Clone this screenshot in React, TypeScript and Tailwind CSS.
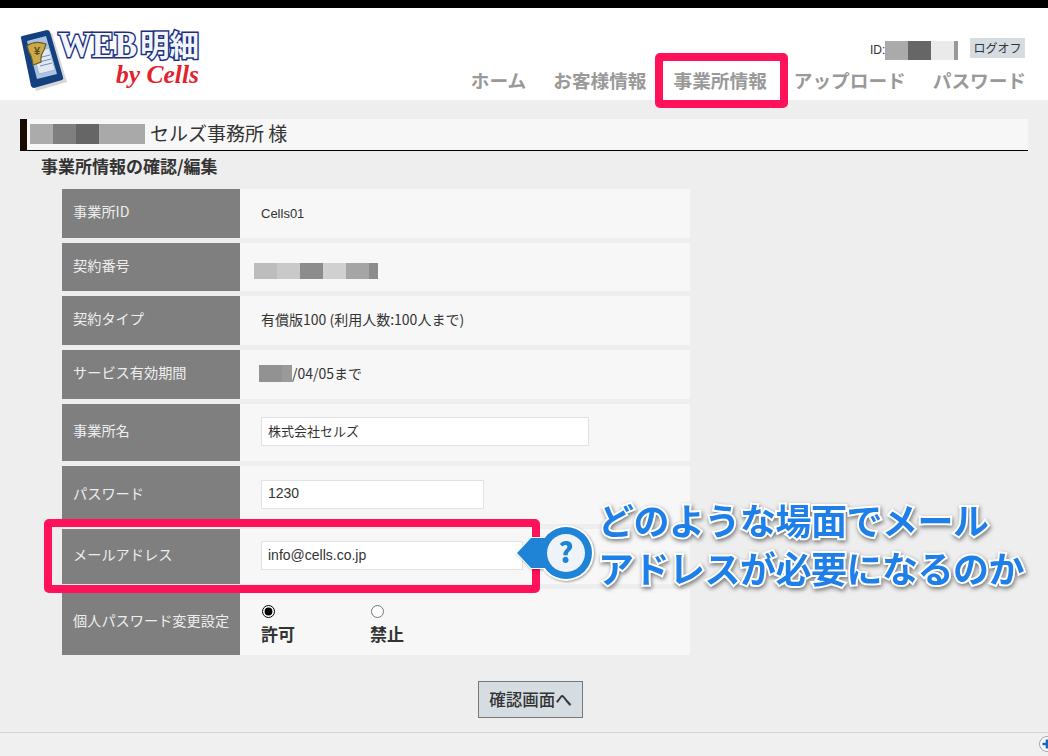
const jp = "font-['Noto_Sans_CJK_JP','Noto_Sans',sans-serif]";

function Pixels({ blocks, className }: { blocks: [number, string][]; className: string }) {
  return (
    <div className={`flex ${className}`}>
      {blocks.map(([w, c], i) => (
        <div key={i} style={{ width: w, backgroundColor: c }} />
      ))}
    </div>
  );
}

function Logo() {
  return (
    <svg width="190" height="82" viewBox="16 16 190 82" className="block">
      <path d="M23 40L52 33L67 82L36 91Z" fill="#bdbdbd" opacity="0.6" />
      <path d="M21 38Q20 37 22 36L47 30Q49 30 50 32L63 77Q64 79 62 80L34 88Q32 88 31 86Z" fill="#14407f" />
      <path d="M27 41L46 36L57 74L37 79Z" fill="#a9c4e2" />
      <path d="M33 52L49 48L55 70L39 74Z" fill="#e2e9f3" stroke="#8aa5c9" strokeWidth="0.6" />
      <path d="M38 58L50 55M39 62L51 59M40 66L52 63" stroke="#6d8fb8" strokeWidth="1" />
      <path d="M27 46Q35 40 46 44L44 50Q40 56 41 62L33 65Q32 56 29 52Z" fill="#c9a94a" stroke="#6e5a20" strokeWidth="1.2" />
      <text x="37" y="55" fontFamily="'Liberation Sans',sans-serif" fontWeight="700" fontSize="11" textAnchor="middle" fill="#5c4c1a">¥</text>
      <text x="58" y="57" fontFamily="'Liberation Serif',serif" fontWeight="700" fontSize="36" fill="#f2f5fb" stroke="#1c2f7f" strokeWidth="3" paintOrder="stroke" textLength="79" lengthAdjust="spacingAndGlyphs">WEB</text>
      <text x="140" y="56" fontFamily="'Noto Sans CJK JP',sans-serif" fontWeight="700" fontSize="30" fill="#f2f5fb" stroke="#1c2f7f" strokeWidth="3" paintOrder="stroke" textLength="59" lengthAdjust="spacingAndGlyphs">明細</text>
      <text x="116" y="83" fontFamily="'Liberation Serif',serif" fontWeight="700" fontStyle="italic" fontSize="26" fill="#e4222e" textLength="83" lengthAdjust="spacingAndGlyphs">by Cells</text>
    </svg>
  );
}

function Row({ label, h, children, mb = 5 }: { label: string; h: number; children: React.ReactNode; mb?: number }) {
  return (
    <div className="flex bg-[#f7f7f7]" style={{ height: h, marginBottom: mb }}>
      <div className="w-[178px] shrink-0 bg-[#7f7f7f] pl-[11px] pb-[3px] flex items-center text-[14.2px] text-[#eeeeee]">{label}</div>
      <div className="flex-1 pl-[21px] pb-[2px] flex items-center text-[14px] text-[#333333]">{children}</div>
    </div>
  );
}

function TextBox({ value, width, size }: { value: string; width: number; size: string }) {
  return (
    <input
      readOnly
      value={value}
      style={{ width }}
      className={`h-[29px] bg-white border border-[#e2e2e2] pl-[6px] pb-[2px] ${size} text-[#333333] font-['Liberation_Sans','Noto_Sans_CJK_JP',sans-serif] outline-none`}
    />
  );
}

export default function App() {
  const nav = ["ホーム", "お客様情報", "事業所情報", "アップロード", "パスワード"];
  return (
    <div className={`relative w-[1048px] h-[756px] overflow-hidden flex flex-col bg-[#eeeeee] ${jp}`}>
      <div className="h-[8px] bg-black shrink-0" />

      <header className="h-[92px] shrink-0 bg-white flex justify-between">
        <div className="pl-[16px] pt-[8px]">
          <Logo />
        </div>
        <div className="flex flex-col items-end pr-[22px] pt-[30px]">
          <div className="flex items-start pr-[1px]">
            <div className="flex items-center h-[23px] mr-[12px]">
              <span className="text-[12px] text-[#333333] w-[15px] font-['Liberation_Sans',sans-serif]">ID:</span>
              <Pixels className="h-[19px] mt-[1px]" blocks={[[23, "#aaaaaa"], [23, "#666666"], [23, "#eaeaea"], [4, "#999999"]]} />
            </div>
            <div className="h-[20px] w-[55px] bg-[#d5dde3] text-[12px] text-[#333333] flex items-center justify-center">ログオフ</div>
          </div>
          <nav className="flex gap-[27px] mt-[5px] text-[18.67px] leading-[28px] font-bold text-[#999999]">
            {nav.map((n) => (
              <span key={n}>{n}</span>
            ))}
          </nav>
        </div>
      </header>

      <main className="flex-1">
        <div className="mt-[19px] ml-[20px] w-[1008px] h-[32px] bg-[#f7f7f7] border-l-[7px] border-l-[#1a0a04] border-b border-b-black flex items-center pl-[3px]">
          <Pixels className="h-[20px] w-[115px] -mt-[1px]" blocks={[[23, "#ababab"], [23, "#7f7f7f"], [23, "#666666"], [23, "#a9a9a9"], [23, "#a9a9a9"]]} />
          <span className="ml-[5px] mb-[3px] text-[19px] leading-[26px] text-[#333333]">セルズ事務所 様</span>
        </div>
        <h2 className="ml-[41px] mt-[3px] h-[35px] text-[17px] leading-[24px] font-bold text-[#333333]">事業所情報の確認/編集</h2>

        <div className="ml-[62px] w-[628px]">
          <Row label="事業所ID" h={49}>
            <span className="font-['Liberation_Sans',sans-serif] text-[13px] pt-[3px]">Cells01</span>
          </Row>
          <Row label="契約番号" h={48}>
            <Pixels className="h-[16px] w-[124px] -ml-[7px] mt-[9px]" blocks={[[23, "#bdbdbd"], [23, "#c9c9c9"], [23, "#8c8c8c"], [23, "#d0d0d0"], [23, "#a5a5a5"], [9, "#8c8c8c"]]} />
          </Row>
          <Row label="契約タイプ" h={49}>有償版100 (利用人数:100人まで)</Row>
          <Row label="サービス有効期間" h={49}>
            <Pixels className="h-[17px] w-[33px] -ml-[2px]" blocks={[[23, "#929292"], [10, "#9a9a9a"]]} />
            <span>/04/05まで</span>
          </Row>
          <Row label="事業所名" h={57} mb={5}>
            <TextBox value="株式会社セルズ" width={328} size="text-[13px]" />
          </Row>
          <Row label="パスワード" h={58} mb={5}>
            <TextBox value="1230" width={223} size="text-[14px]" />
          </Row>
          <Row label="メールアドレス" h={55}>
            <TextBox value="info@cells.co.jp" width={262} size="text-[14px]" />
          </Row>
          <Row label="個人パスワード変更設定" h={66} mb={0}>
            <div className="flex gap-[75px] mt-[7px] text-[17px] leading-[22px] font-bold text-[#333333]">
              <label className="w-[34px] flex flex-col">
                <input type="radio" name="pw" defaultChecked className="w-[13px] h-[13px] ml-[1px] mb-[5px] accent-black" />
                許可
              </label>
              <label className="w-[34px] flex flex-col">
                <input type="radio" name="pw" className="w-[13px] h-[13px] ml-[1px] mb-[5px]" />
                禁止
              </label>
            </div>
          </Row>
        </div>

        <button className="block ml-[478px] mt-[26px] w-[105px] h-[37px] bg-[#d5dde3] border border-[#777777] text-[16.5px] font-medium text-[#333333]">
          確認画面へ
        </button>
      </main>

      <footer className="relative h-[24px] shrink-0 bg-[#f0f0f0] border-t border-t-[#d4d4d4]">
        <svg width="16" height="16" viewBox="0 0 16 16" className="absolute left-[1039px] top-[3px]">
          <circle cx="8" cy="8" r="7.5" fill="#ffffff" stroke="#9aa5b5" />
          <path d="M8 3.5v9M3.5 8h9" stroke="#1667c4" strokeWidth="2.6" />
        </svg>
      </footer>

      {/* annotations drawn over the page */}
      <div className="absolute left-[655px] top-[53px] w-[133px] h-[55px] border-[8px] border-[#ff1259] rounded-[5px]" />
      <div className="absolute left-[44px] top-[519px] w-[496px] h-[74px] border-[8px] border-[#ff1259] rounded-[5px]" />

      <svg width="84" height="64" viewBox="514 521 84 64" className="absolute left-[514px] top-[521px] [filter:drop-shadow(1px_1px_1px_rgba(0,0,0,0.35))]">
        <path d="M517 553L531 538H560V568H531Z" fill="#1f84d6" stroke="#ffffff" strokeWidth="2" />
        <circle cx="566" cy="553" r="28" fill="#ffffff" />
        <circle cx="566" cy="553" r="26" fill="#1f84d6" />
        <path d="M517 553L531 538H560V568H531Z" fill="#1f84d6" />
        <circle cx="566" cy="553" r="19" fill="#eef3f8" />
        <text x="566" y="563" textAnchor="middle" fontFamily="'Noto Sans CJK JP',sans-serif" fontWeight="900" fontSize="28" fill="#1f84d6">?</text>
      </svg>

      <div className="absolute left-[598px] top-[495px] text-[36px] leading-[48px] font-bold whitespace-nowrap text-[#1f7fe8] tracking-[-0.5px] [-webkit-text-stroke:4px_#ffffff] [paint-order:stroke_fill] [filter:drop-shadow(1px_2px_2px_rgba(0,0,0,0.5))]">
        <div>どのような場面でメール</div>
        <div>アドレスが必要になるのか</div>
      </div>
    </div>
  );
}
